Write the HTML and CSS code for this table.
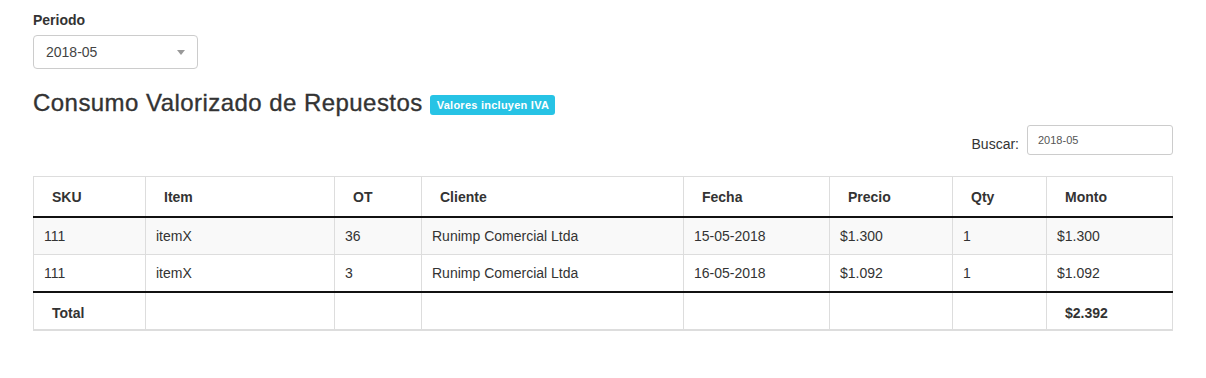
FILE: index.html
```html
<!DOCTYPE html>
<html lang="es">
<head>
<meta charset="utf-8">
<title>Consumo Valorizado de Repuestos</title>
<link rel="stylesheet" href="styles.css">
</head>
<body>
<div class="page">
  <div class="form-group">
    <label class="field-label">Periodo</label>
    <div class="select">
      <span class="select-value">2018-05</span>
      <span class="select-arrow"></span>
    </div>
  </div>

  <h3 class="title"><span class="title-text">Consumo Valorizado de Repuestos</span> <span class="badge">Valores incluyen IVA</span></h3>

  <div class="filter">
    <label class="filter-label">Buscar:</label>
    <div class="filter-input">2018-05</div>
  </div>

  <table class="grid">
    <colgroup>
      <col class="c1"><col class="c2"><col class="c3"><col class="c4">
      <col class="c5"><col class="c6"><col class="c7"><col class="c8">
    </colgroup>
    <thead>
      <tr>
        <th>SKU</th><th>Item</th><th>OT</th><th>Cliente</th>
        <th>Fecha</th><th>Precio</th><th>Qty</th><th>Monto</th>
      </tr>
    </thead>
    <tbody>
      <tr class="odd">
        <td>111</td><td>itemX</td><td>36</td><td>Runimp Comercial Ltda</td>
        <td>15-05-2018</td><td>$1.300</td><td>1</td><td>$1.300</td>
      </tr>
      <tr>
        <td>111</td><td>itemX</td><td>3</td><td>Runimp Comercial Ltda</td>
        <td>16-05-2018</td><td>$1.092</td><td>1</td><td>$1.092</td>
      </tr>
    </tbody>
    <tfoot>
      <tr>
        <th>Total</th><th></th><th></th><th></th>
        <th></th><th></th><th></th><th>$2.392</th>
      </tr>
    </tfoot>
  </table>
</div>
</body>
</html>
```

FILE: styles.css
```css
* { box-sizing: border-box; }

html, body {
  margin: 0;
  padding: 0;
  background: #fff;
}

body {
  font-family: "Liberation Sans", Arial, Helvetica, sans-serif;
  font-size: 14px;
  line-height: 20px;
  color: #333;
}

.page {
  padding: 10px 33px 0 33px;
}

.form-group {
  display: flex;
  flex-direction: column;
  align-items: flex-start;
}

.field-label {
  font-weight: bold;
  margin-bottom: 5px;
}

.select {
  width: 165px;
  height: 34px;
  border: 1px solid #ccc;
  border-radius: 4px;
  display: flex;
  align-items: center;
  justify-content: space-between;
  padding: 0 12px 0 12px;
  color: #444;
}

.select-arrow {
  width: 0;
  height: 0;
  border-left: 4px solid transparent;
  border-right: 4px solid transparent;
  border-top: 5px solid #999;
}

.title {
  font-size: 24px;
  font-weight: normal;
  line-height: 26px;
  margin: 21px 0 0 0;
  color: #333;
  display: flex;
  align-items: center;
}

.title-text {
  letter-spacing: 0.45px;
  -webkit-text-stroke: 0.35px #333;
}

.badge {
  display: inline-block;
  margin-left: 7px;
  margin-top: 3px;
  height: 20px;
  line-height: 20px;
  padding: 0 6px 0 7px;
  border-radius: 3px;
  background: #27c3e5;
  color: #fff;
  font-size: 11px;
  font-weight: bold;
  letter-spacing: 0.25px;
}

.filter {
  display: flex;
  justify-content: flex-end;
  align-items: center;
  margin-top: 9px;
}

.filter-label {
  margin-right: 8px;
  padding-top: 7px;
}

.filter-input {
  width: 146px;
  height: 30px;
  border: 1px solid #ccc;
  border-radius: 3px;
  padding: 4px 10px;
  font-size: 11px;
  line-height: 20px;
  color: #555;
}

.grid {
  width: 100%;
  margin-top: 21px;
  border-collapse: collapse;
  table-layout: fixed;
  border: 1px solid #ddd;
  border-bottom: 2px solid #ddd;
}

.c1 { width: 112px; }
.c2 { width: 189px; }
.c3 { width: 87px; }
.c4 { width: 262px; }
.c5 { width: 146px; }
.c6 { width: 123px; }
.c7 { width: 94px; }
.c8 { width: 126px; }

.grid th,
.grid td {
  border-left: 1px solid #ddd;
  border-right: 1px solid #ddd;
  text-align: left;
  vertical-align: top;
}

.grid thead th {
  font-weight: bold;
  padding: 10px 18px 9px 18px;
  height: 39px;
  border-bottom: 2px solid #111;
}

.grid tbody td {
  padding: 8px 10px;
  border-top: 1px solid #ddd;
}

.grid tbody tr:first-child td {
  border-top: 0;
}

.grid tbody tr.odd td {
  background: #f9f9f9;
}

.grid tfoot th {
  font-weight: bold;
  padding: 10px 18px 6px 18px;
  border-top: 2px solid #111;
}
```
